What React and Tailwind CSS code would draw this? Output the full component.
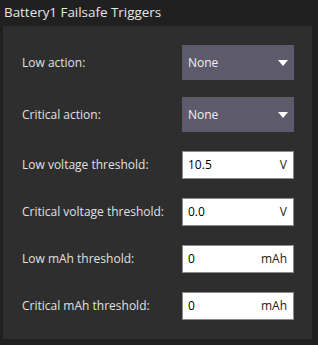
import React from 'react';

const selects = [
  { label: 'Low action:', value: 'None' },
  { label: 'Critical action:', value: 'None' },
];

const inputs = [
  { label: 'Low voltage threshold:', value: '10.5', unit: 'V' },
  { label: 'Critical voltage threshold:', value: '0.0', unit: 'V' },
  { label: 'Low mAh threshold:', value: '0', unit: 'mAh' },
  { label: 'Critical mAh threshold:', value: '0', unit: 'mAh' },
];

const Caret = () => (
  <svg width="10" height="6" viewBox="0 0 10 6" className="text-white">
    <path d="M0 0 L10 0 L5 6 Z" fill="currentColor" />
  </svg>
);

export default function App() {
  return (
    <div
      className="w-[318px] h-[345px] bg-[#202020] overflow-hidden"
      style={{ fontFamily: '"Open Sans", "Noto Sans", sans-serif' }}
    >
      <div className="h-[26px] pl-[4px] pt-[2px] text-[13.4px] text-[#e6e6e6] leading-[20px]">
        Battery1 Failsafe Triggers
      </div>
      <div className="ml-[3px] w-[309px] h-[313px] bg-[#2e2e2e] pt-[19px] pl-[19px] flex flex-col">
        <div className="flex flex-col gap-[17px]">
          {selects.map((s) => (
            <div key={s.label} className="flex items-center h-[35px]">
              <div className="w-[160px] text-[12px] text-[#e0e0e0]">{s.label}</div>
              <div className="w-[112px] h-[35px] bg-[#5d5b6b] flex items-center justify-between pl-[6px] pr-[6px]">
                <span className="text-[12px] text-[#f0f0f0]">{s.value}</span>
                <Caret />
              </div>
            </div>
          ))}
        </div>
        <div className="flex flex-col gap-[19px] mt-[19px]">
          {inputs.map((r) => (
            <div key={r.label} className="flex items-center h-[28px]">
              <div className="w-[160px] text-[12px] text-[#e0e0e0]">{r.label}</div>
              <div className="w-[112px] h-[28px] bg-white border border-[#8a8a8a] flex items-center justify-between pl-[5px] pr-[6px]">
                <span className="text-[12px] text-black">{r.value}</span>
                <span className="text-[12px] text-[#222]">{r.unit}</span>
              </div>
            </div>
          ))}
        </div>
      </div>
    </div>
  );
}
